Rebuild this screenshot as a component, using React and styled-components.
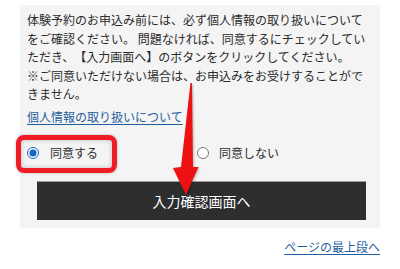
import React from "react";
import styled, { createGlobalStyle } from "styled-components";

const Global = createGlobalStyle`
  html, body { margin: 0; padding: 0; background: #ffffff; }
  body {
    font-family: "Noto Sans CJK JP", "Noto Sans", sans-serif;
    color: #333;
    text-spacing-trim: space-all;
  }
`;

const Page = styled.div`
  position: relative;
  width: 400px;
  height: 269px;
  padding: 5px 20px 0 20px;
  box-sizing: border-box;
  font-size: 12px;
  line-height: 18.5px;
`;

const Panel = styled.section`
  background: #f4f4f4;
  padding: 6px 14px 8px 7px;
`;

const Notice = styled.p`
  margin: 0;
  font-size: 12px;
  line-height: 18.5px;
  color: #2b2b2b;
  text-spacing-trim: space-all;
`;

const Link = styled.a`
  display: inline-block;
  vertical-align: top;
  font-size: 12px;
  line-height: 18.5px;
  color: #1f5f9e;
  text-decoration: underline;
  text-underline-offset: 2px;
`;

const InfoLink = styled(Link)`
  margin-top: 4px;
`;

const Choices = styled.div`
  display: grid;
  grid-template-columns: 170px 1fr;
  margin-top: 17px;
  height: 20px;
`;

const Choice = styled.label`
  display: flex;
  align-items: center;
  gap: ${(p) => p.$gap}px;
  font-size: 12px;
  color: #2b2b2b;
`;

const Radio = styled.input`
  margin: 0;
  width: 12px;
  height: 12px;
  accent-color: #1565c0;
`;

const Submit = styled.button`
  display: block;
  width: calc(100% - 10px);
  margin: 18px 0 0 10px;
  height: 39px;
  border: none;
  border-top: 1px solid #9a9a9a;
  background: #2e2e2e;
  color: #ffffff;
  font-family: "Noto Sans CJK JP", sans-serif;
  font-size: 14px;
  padding: 0;
`;

const Footer = styled.div`
  display: flex;
  justify-content: flex-end;
  margin-top: 10px;
`;

const Highlight = styled.div`
  position: absolute;
  left: 16px;
  top: 135px;
  width: 101px;
  height: 38px;
  box-sizing: border-box;
  border: 5px solid #ee1c25;
  border-radius: 8px;
  box-shadow: 0 0 3px rgba(0, 0, 0, 0.25), inset 0 0 5px rgba(0, 0, 0, 0.22);
`;

const Arrow = styled.svg`
  position: absolute;
  left: 0;
  top: 0;
  pointer-events: none;
  filter: drop-shadow(1px 1px 1px rgba(0, 0, 0, 0.25));
`;

export default function App() {
  return (
    <>
      <Global />
      <Page>
        <Panel>
          <Notice>
            体験予約のお申込み前には、必ず個人情報の取り扱いについてをご確認ください。 問題なければ、同意するにチェックしていただき、【入力画面へ】のボタンをクリックしてください。
            <br />
            ※ご同意いただけない場合は、お申込みをお受けすることができません。
          </Notice>
          <InfoLink href="#">個人情報の取り扱いについて</InfoLink>
          <Choices>
            <Choice $gap={11}>
              <Radio type="radio" name="agree" defaultChecked />
              同意する
            </Choice>
            <Choice $gap={10}>
              <Radio type="radio" name="agree" />
              同意しない
            </Choice>
          </Choices>
          <Submit type="button">入力確認画面へ</Submit>
        </Panel>
        <Footer>
          <Link href="#">ページの最上段へ</Link>
        </Footer>
        <Highlight />
        <Arrow width="400" height="269" viewBox="0 0 400 269">
          <polygon
            points="190.5,83 192,83 193,167 198.5,167 186,195 173,168 181,167"
            fill="#ee1111"
          />
        </Arrow>
      </Page>
    </>
  );
}
